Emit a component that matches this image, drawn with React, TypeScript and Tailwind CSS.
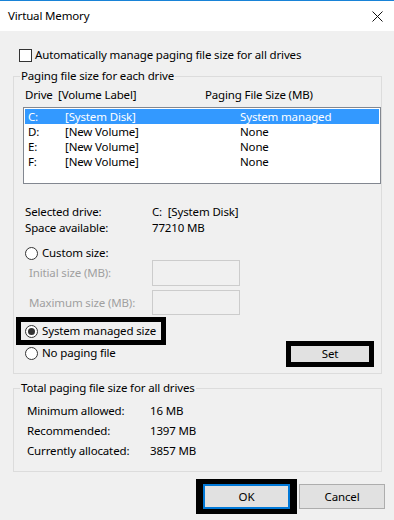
import React from "react";

const Radio = ({ checked }: { checked?: boolean }) => (
  <span className="w-[13px] h-[13px] rounded-full border border-[#333333] bg-white flex items-center justify-center shrink-0">
    {checked && <span className="w-[7px] h-[7px] rounded-full bg-[#333333]" />}
  </span>
);

const drives = [
  { d: "C:", label: "[System Disk]", size: "System managed" },
  { d: "D:", label: "[New Volume]", size: "None" },
  { d: "E:", label: "[New Volume]", size: "None" },
  { d: "F:", label: "[New Volume]", size: "None" },
];

const totals = [
  ["Minimum allowed:", "16 MB"],
  ["Recommended:", "1397 MB"],
  ["Currently allocated:", "3857 MB"],
];

export default function App() {
  return (
    <div
      className="w-[394px] h-[520px] bg-[#f0f0f0] text-[11.5px] tracking-[-0.15px] leading-[16px] text-black whitespace-nowrap overflow-hidden flex flex-col"
      style={{ fontFamily: '"Noto Sans", "Open Sans", sans-serif' }}
    >
      {/* title bar */}
      <div className="h-[31px] bg-white border-t border-[#1883d7] flex items-center justify-between pl-[8px] pr-[10px] shrink-0">
        <span>Virtual Memory</span>
        <svg width="11" height="11" viewBox="0 0 11 11" className="mr-[1px]">
          <path d="M0.5 0.5 L10.5 10.5 M10.5 0.5 L0.5 10.5" stroke="#111" strokeWidth="1" />
        </svg>
      </div>

      {/* auto manage checkbox */}
      <div className="mt-[16px] h-[16px] flex items-center pl-[19px] gap-[3px]">
        <span className="w-[13px] h-[13px] border border-[#333333] bg-white" />
        <span>Automatically manage paging file size for all drives</span>
      </div>

      {/* group 1 */}
      <fieldset className="mt-[5px] ml-[13px] w-[369px] border border-[#dcdcdc]">
        <legend className="ml-[6px] px-[1px]">Paging file size for each drive</legend>
        <div className="mt-[3px] h-[16px] flex pl-[11px]">
          <span className="w-[33px]">Drive</span>
          <span className="w-[147px]">[Volume Label]</span>
          <span>Paging File Size (MB)</span>
        </div>
        <div className="mt-[4px] ml-[9px] w-[358px] h-[77px] border border-[#828790] bg-white p-[1px]">
          {drives.map((r, i) => (
            <div
              key={r.d}
              className={
                i === 0
                  ? "h-[15px] leading-[15px] flex items-center pl-[3px] bg-[#3399ff] text-white"
                  : "h-[15px] leading-[15px] flex items-center pl-[3px]"
              }
            >
              <span className="w-[37px]">{r.d}</span>
              <span className="w-[175px]">{r.label}</span>
              <span>{r.size}</span>
            </div>
          ))}
        </div>

        <div className="mt-[20px] pl-[11px]">
          <div className="h-[16px] flex">
            <span className="w-[127px]">Selected drive:</span>
            <span>C:&nbsp;&nbsp;[System Disk]</span>
          </div>
          <div className="h-[16px] flex">
            <span className="w-[127px]">Space available:</span>
            <span>77210 MB</span>
          </div>
        </div>

        <div className="mt-[10px] h-[14px] flex items-center pl-[11px] gap-[4px]">
          <Radio />
          <span>Custom size:</span>
        </div>
        <div className="h-[26px] flex items-center pl-[15px]">
          <span className="w-[123px] text-[#a0a0a0]">Initial size (MB):</span>
          <span className="w-[88px] h-[26px] border border-[#cccccc] bg-[#f0f0f0]" />
        </div>
        <div className="mt-[4px] h-[25px] flex items-center pl-[15px]">
          <span className="w-[123px] text-[#a0a0a0]">Maximum size (MB):</span>
          <span className="w-[88px] h-[25px] border border-[#cccccc] bg-[#f0f0f0]" />
        </div>

        <div className="mt-[2px] flex items-start justify-between pr-[7px] pb-[6px]">
          <div className="flex flex-col ml-[2px]">
            <div className="w-[150px] h-[28px] border-[5px] border-black flex items-center pl-[4px] gap-[4px]">
              <Radio checked />
              <span>System managed size</span>
            </div>
            <div className="mt-[1px] h-[14px] flex items-center pl-[9px] gap-[4px]">
              <Radio />
              <span>No paging file</span>
            </div>
          </div>
          <div className="mt-[24px] w-[88px] h-[26px] border-[5px] border-black bg-[#e1e1e1] flex items-center justify-center">
            Set
          </div>
        </div>
      </fieldset>

      {/* group 2 */}
      <fieldset className="mt-[6px] ml-[13px] w-[369px] border border-[#dcdcdc] pb-[10px]">
        <legend className="ml-[6px] px-[1px]">Total paging file size for all drives</legend>
        <div className="mt-[5px] pl-[13px]">
          {totals.map(([k, v]) => (
            <div key={k} className="h-[20px] flex items-center">
              <span className="w-[123px]">{k}</span>
              <span>{v}</span>
            </div>
          ))}
        </div>
      </fieldset>

      {/* buttons */}
      <div className="mt-[7px] flex justify-end items-start pr-[9px] gap-[2px]">
        <div className="border-x-[7px] border-y-[5px] border-black">
          <div className="w-[87px] h-[25px] border-2 border-[#0078d7] bg-[#e1e1e1] flex items-center justify-center">
            OK
          </div>
        </div>
        <div className="mt-[5px] w-[86px] h-[25px] border border-[#adadad] bg-[#e1e1e1] flex items-center justify-center">
          Cancel
        </div>
      </div>
    </div>
  );
}
